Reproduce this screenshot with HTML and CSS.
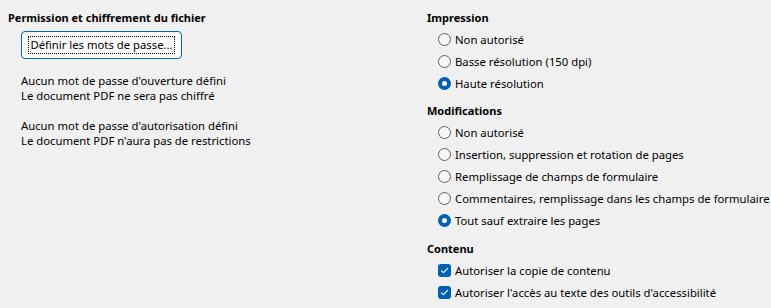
FILE: index.html
```html
<!DOCTYPE html>
<html lang="fr">
<head>
<meta charset="utf-8">
<link rel="stylesheet" href="styles.css">
</head>
<body>
<div class="page">
  <div class="col left">
    <div class="head">Permission et chiffrement du fichier</div>
    <div class="indent">
      <button class="btn"><span class="focus">Définir les mots de passe...</span></button>
      <p class="info">Aucun mot de passe d'ouverture défini<br>Le document PDF ne sera pas chiffré</p>
      <p class="info second">Aucun mot de passe d'autorisation défini<br>Le document PDF n'aura pas de restrictions</p>
    </div>
  </div>
  <div class="col right">
    <div class="head">Impression</div>
    <div class="row"><span class="radio"></span>Non autorisé</div>
    <div class="row"><span class="radio"></span>Basse résolution (150 dpi)</div>
    <div class="row"><span class="radio on"></span>Haute résolution</div>

    <div class="head gap1">Modifications</div>
    <div class="row"><span class="radio"></span>Non autorisé</div>
    <div class="row"><span class="radio"></span>Insertion, suppression et rotation de pages</div>
    <div class="row"><span class="radio"></span>Remplissage de champs de formulaire</div>
    <div class="row"><span class="radio"></span>Commentaires, remplissage dans les champs de formulaire</div>
    <div class="row"><span class="radio on"></span>Tout sauf extraire les pages</div>

    <div class="head gap2">Contenu</div>
    <div class="row"><span class="check"><svg width="13" height="13" viewBox="0 0 13 13"><path d="M3.5 6.8 L5.5 8.7 L9.6 4.4" fill="none" stroke="#fff" stroke-width="1.1" stroke-linecap="round" stroke-linejoin="round"/></svg></span>Autoriser la copie de contenu</div>
    <div class="row"><span class="check"><svg width="13" height="13" viewBox="0 0 13 13"><path d="M3.5 6.8 L5.5 8.7 L9.6 4.4" fill="none" stroke="#fff" stroke-width="1.1" stroke-linecap="round" stroke-linejoin="round"/></svg></span>Autoriser l'accès au texte des outils d'accessibilité</div>
  </div>
</div>
</body>
</html>
```

FILE: styles.css
```css
html, body {
  margin: 0;
  padding: 0;
  background: #f0f0f0;
}
body {
  font-family: "Noto Sans", "Open Sans", sans-serif;
  font-size: 11.3px;
  color: #000;
  width: 771px;
  height: 308px;
  overflow: hidden;
  white-space: nowrap;
}
.page {
  display: flex;
  padding-top: 6px;
}
.col.left {
  width: 419px;
  padding-left: 8px;
}
.col.right {
  flex: 1;
}
.head {
  height: 22px;
  display: flex;
  align-items: center;
  font-weight: bold;
  font-size: 11px;
}
.gap1 { margin-top: 5px; }
.gap2 { margin-top: 6px; }
.indent {
  padding-left: 13px;
}
.btn {
  margin-top: 3px;
  width: 161px;
  height: 28px;
  border: 1px solid #0067c0;
  border-radius: 4px;
  background: #fdfdfd;
  font: inherit;
  color: #000;
  padding: 0;
  display: flex;
  align-items: center;
  justify-content: center;
}
.focus {
  display: block;
  border: 1px dotted #000;
  padding: 0 1px;
  line-height: 16px;
}
.info {
  margin: 14px 0 0;
  line-height: 15px;
}
.info.second {
  margin-top: 15px;
}
.row {
  height: 22px;
  display: flex;
  align-items: center;
  padding-left: 11px;
}
.radio {
  width: 13px;
  height: 13px;
  box-sizing: border-box;
  border: 1px solid #606060;
  border-radius: 50%;
  background: #f6f6f6;
  margin-right: 4px;
  flex: none;
}
.radio.on {
  border: 4px solid #005fb8;
  background: #fff;
}
.check {
  width: 13px;
  height: 13px;
  border-radius: 3px;
  background: #005fb8;
  margin-right: 4px;
  flex: none;
  display: block;
}
.check svg {
  display: block;
}
```
